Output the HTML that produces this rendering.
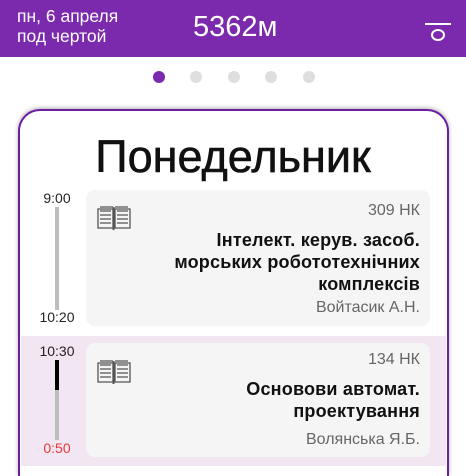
<!DOCTYPE html>
<html><head><meta charset="utf-8"><style>
*{margin:0;padding:0;box-sizing:border-box}
html,body{width:466px;height:476px;overflow:hidden}
body{background:#fff;font-family:"Liberation Sans",sans-serif;position:relative}
#w{position:absolute;left:0;top:0;width:466px;height:476px;overflow:hidden}
.hdr{position:absolute;left:0;top:0;width:466px;height:57px;background:#7b2aad;color:#fff}
.a{position:absolute;font-size:17.5px;line-height:20px}
.dot{position:absolute;top:71px;width:12px;height:12px;border-radius:50%;background:#dedede}
.card{position:absolute;left:18px;top:109px;width:431px;height:367px;border:2.5px solid #6a1fa0;border-bottom:none;border-radius:22px 22px 0 0;box-shadow:0 -1px 4px rgba(0,0,0,.3)}
.title{position:absolute;left:0;width:100%;top:132px;text-align:center;font-size:45px;line-height:50px;color:#111;-webkit-text-stroke:0.6px #111}
.box{position:absolute;left:86px;width:344px;background:#f5f5f5;border-radius:9px}
.r{position:absolute;right:10px;text-align:right;color:#666;font-size:16px}
.t{position:absolute;right:10px;text-align:right;color:#111;font-size:18px;line-height:22px;font-weight:bold;letter-spacing:.2px}
.tm{position:absolute;width:60px;left:27px;text-align:center;font-size:14px;color:#222}
</style></head><body><div id="w">
<div class="hdr">
<div class="a" style="left:17px;top:6px">пн, 6 апреля<br>под чертой</div>
<div style="position:absolute;left:193px;top:10px;font-size:29px;line-height:34px">5362м</div>
<div style="position:absolute;left:425px;top:23px;width:26px;height:2px;background:#fff"></div>
<div style="position:absolute;left:431px;top:29px;width:14px;height:12px;border:2.5px solid #fff;border-radius:50%"></div>
</div>
<div class="dot" style="left:153px;background:#7b2aad"></div>
<div class="dot" style="left:190px"></div>
<div class="dot" style="left:228px"></div>
<div class="dot" style="left:265px"></div>
<div class="dot" style="left:303px"></div>
<div class="card"></div>
<div class="title">Понедельник</div>
<div style="position:absolute;left:21px;top:336px;width:425px;height:130px;background:#f2e6f3"></div>

<div class="tm" style="top:190px">9:00</div>
<div style="position:absolute;left:55px;top:207px;width:4px;height:103px;background:#bdbdbd"></div>
<div class="tm" style="top:309px">10:20</div>
<div class="box" style="top:190px;height:136px"></div>
<svg style="position:absolute;left:97px;top:205px" width="34" height="26" viewBox="0 0 34 26" fill="none" stroke="#555" stroke-width="1.3"><path d="M1 4h15v19H1z M18 4h15v19H18z"/><path d="M3 2h13M18 2h13M3 6h11M20 6h11M3 10h11M20 10h11M3 14h11M20 14h11M3 18h11M20 18h11"/><path d="M16.5 2v23" stroke-width="2"/></svg>
<div class="r" style="top:202px;right:46px">309 НК</div>
<div class="t" style="top:229px;right:46px">Інтелект. керув. засоб.<br>морських робототехнічних<br>комплексів</div>
<div class="r" style="top:299px;right:46px">Войтасик А.Н.</div>

<div class="tm" style="top:343px">10:30</div>
<div style="position:absolute;left:55px;top:360px;width:4px;height:30px;background:#000"></div>
<div style="position:absolute;left:55px;top:390px;width:4px;height:50px;background:#bdbdbd"></div>
<div class="tm" style="top:440px;color:#e53935">0:50</div>
<div class="box" style="top:343px;height:114px"></div>
<svg style="position:absolute;left:97px;top:359px" width="34" height="26" viewBox="0 0 34 26" fill="none" stroke="#555" stroke-width="1.3"><path d="M1 4h15v19H1z M18 4h15v19H18z"/><path d="M3 2h13M18 2h13M3 6h11M20 6h11M3 10h11M20 10h11M3 14h11M20 14h11M3 18h11M20 18h11"/><path d="M16.5 2v23" stroke-width="2"/></svg>
<div class="r" style="top:351px;right:46px">134 НК</div>
<div class="t" style="top:378px;right:46px">Основови автомат.<br>проектування</div>
<div class="r" style="top:431px;right:46px">Волянська Я.Б.</div>
</div></body></html>
